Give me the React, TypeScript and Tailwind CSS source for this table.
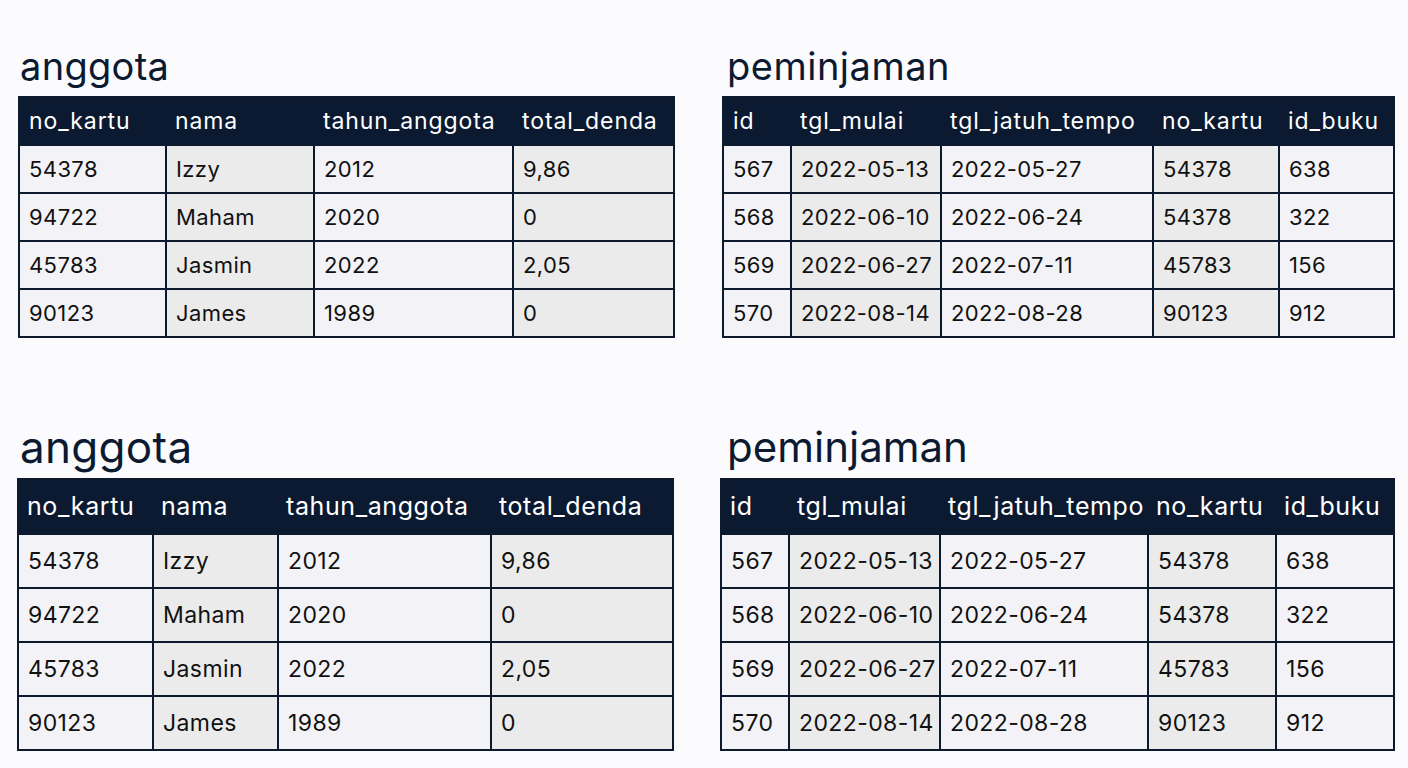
const anggotaCols = ["no_kartu", "nama", "tahun_anggota", "total_denda"];
const anggotaRows = [
  ["54378", "Izzy", "2012", "9,86"],
  ["94722", "Maham", "2020", "0"],
  ["45783", "Jasmin", "2022", "2,05"],
  ["90123", "James", "1989", "0"],
];

const pinjamCols = ["id", "tgl_mulai", "tgl_jatuh_tempo", "no_kartu", "id_buku"];
const pinjamRows = [
  ["567", "2022-05-13", "2022-05-27", "54378", "638"],
  ["568", "2022-06-10", "2022-06-24", "54378", "322"],
  ["569", "2022-06-27", "2022-07-11", "45783", "156"],
  ["570", "2022-08-14", "2022-08-28", "90123", "912"],
];

type TableProps = {
  cols: string[];
  rows: string[][];
  widths: number[];
  big?: boolean;
};

const DataTable = ({ cols, rows, widths, big }: TableProps) => {
  const headH = big ? "h-[55px]" : "h-[48px]";
  const rowH = big ? "h-[54px]" : "h-[48px]";
  const headText = big ? "text-[25px] tracking-[0.6px]" : "text-[23px] tracking-[0.9px]";
  const bodyText = big ? "text-[23px] tracking-[0.4px]" : "text-[22px] tracking-[0.4px]";
  const total = widths.reduce((a, b) => a + b, 0);
  return (
    <table className="border-collapse border-2 border-[#0d1a2e] table-fixed" style={{ width: total }}>
      <colgroup>
        {widths.map((w, i) => (
          <col key={i} style={{ width: w }} />
        ))}
      </colgroup>
      <thead>
        <tr className={`${headH} bg-[#0b1a31]`}>
          {cols.map((c) => (
            <th
              key={c}
              className={`${big ? "px-[8px]" : "px-[9px]"} ${headText} text-left font-normal text-white whitespace-nowrap overflow-visible`}
            >
              {c}
            </th>
          ))}
        </tr>
      </thead>
      <tbody>
        {rows.map((r, ri) => (
          <tr key={ri} className={rowH}>
            {r.map((v, ci) => (
              <td
                key={ci}
                className={`px-[9px] ${bodyText} border-2 border-[#0d1a2e] text-[#111111] whitespace-nowrap ${
                  ci % 2 === 0 ? "bg-[#f3f3f7]" : "bg-[#ebebeb]"
                }`}
              >
                {v}
              </td>
            ))}
          </tr>
        ))}
      </tbody>
    </table>
  );
};

export default function App() {
  return (
    <div className="w-[1408px] h-[768px] bg-[#fbfbfd] overflow-hidden font-['Inter',sans-serif]">
      {/* baris atas */}
      <div className="flex pt-[40px]">
        <div className="pl-[18px] w-[704px]">
          <h2 className="text-[38px] leading-[52px] text-[#0b1a31] pl-[2px] tracking-[0.3px]">anggota</h2>
          <div className="mt-[4px]">
            <DataTable cols={anggotaCols} rows={anggotaRows} widths={[147, 148, 199, 161]} />
          </div>
        </div>
        <div className="pl-[18px]">
          <h2 className="text-[38px] leading-[52px] text-[#0b1a31] pl-[5px] tracking-[0.5px]">peminjaman</h2>
          <div className="mt-[4px]">
            <DataTable cols={pinjamCols} rows={pinjamRows} widths={[68, 150, 212, 126, 115]} />
          </div>
        </div>
      </div>

      {/* baris bawah */}
      <div className="flex pt-[80px]">
        <div className="pl-[17px] w-[703px]">
          <h2 className="text-[44px] leading-[58px] text-[#0b1a31] pl-[3px] tracking-[0.3px]">anggota</h2>
          <div className="mt-[2px]">
            <DataTable cols={anggotaCols} rows={anggotaRows} widths={[135, 125, 213, 182]} big />
          </div>
        </div>
        <div className="pl-[17px]">
          <h2 className="text-[42px] leading-[58px] text-[#0b1a31] pl-[7px]">peminjaman</h2>
          <div className="mt-[2px]">
            <DataTable cols={pinjamCols} rows={pinjamRows} widths={[68, 151, 208, 128, 118]} big />
          </div>
        </div>
      </div>
    </div>
  );
}
